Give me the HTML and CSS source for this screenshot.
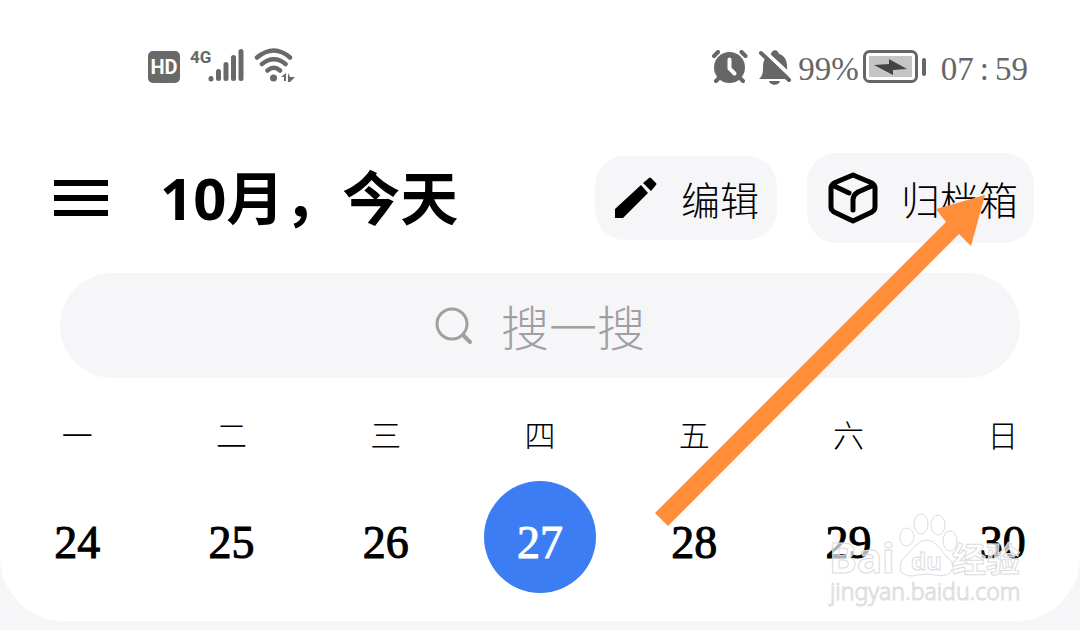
FILE: index.html
```html
<!DOCTYPE html>
<html lang="zh-CN">
<head>
  <meta charset="UTF-8">
  <meta name="viewport" content="width=device-width, initial-scale=1.0">
  <title>10月，今天</title>
  <link rel="stylesheet" href="styles.css">
</head>
<body>
  <div class="screen">
    <div class="status-bar">
      <div class="status-left">
        <span class="hd">HD</span>
        <span class="network">4G</span>
        <svg class="signal" width="36" height="34" viewBox="0 0 36 34" stroke="#696969" stroke-width="5" stroke-linecap="round">
          <path d="M3 30.5v.5M10.500 23.500v7M18 16.500v14M25.500 9.500v21M33 3.500v27"/>
        </svg>
        <svg class="wifi" width="42" height="34" viewBox="0 0 42 34" fill="none" stroke="#696969" stroke-width="4.500" stroke-linecap="round">
          <path d="M3 9.500Q20 -4.500 36 9.500M8 16Q20 6.500 31.500 16M13.500 22.500Q20 17 26 22.500"/>
          <circle cx="19.500" cy="30" r="3.500" fill="#696969" stroke="none"/>
          <path d="M27 29l5-4v8h-2v-4zM34 25l2 4h5l-5 5h-2z" fill="#696969" stroke="none"/>
        </svg>
      </div>
      <div class="status-right">
        <svg width="36" height="34" viewBox="0 0 36 34" fill="none" stroke-linecap="round">
          <circle cx="17.500" cy="17.500" r="15.500" fill="#666"/>
          <path d="M2 6l4-4M29.500 2l4 4M7 28l-3 3M28 28l3 3" stroke="#666" stroke-width="4"/>
          <path d="M17.500 9.500v9l5 5" stroke="#fff" stroke-width="4"/>
        </svg>
        <svg class="bell" width="34" height="35" viewBox="0 0 34 35">
          <path d="M1 29c4-3 4-8 4-12 0-8 4-12 8-13 1-5 7-5 8 0 5 1 8 6 8 12 0 5 1 10 3 13zM11 31h11c-1 5-10 5-11 0z" fill="#666"/>
          <path d="M5 0l30 28" stroke="#fff" stroke-width="4"/>
          <path d="M3 3l28 27" stroke="#666" stroke-width="4" stroke-linecap="round"/>
        </svg>
        <span class="percent">99%</span>
        <svg class="battery" width="64" height="34" viewBox="0 0 64 34">
          <rect x="1.500" y="1.500" width="52" height="30" rx="5" fill="#fff" stroke="#666" stroke-width="3"/>
          <rect x="6" y="6" width="43" height="21" rx="1" fill="#c5c5c5"/>
          <path d="M11 15l15-1V9l18 10-14 1v5z" fill="#444"/>
          <rect x="59" y="8" width="4" height="18" rx="2" fill="#666"/>
        </svg>
        <time class="clock"><span>07</span><span>:</span><span>59</span></time>
      </div>
    </div>

    <header class="header">
      <button class="menu" aria-label="菜单">
        <span></span>
        <span></span>
        <span></span>
      </button>
      <h1>10月，今天</h1>
      <div class="actions">
        <button class="action">
          <svg width="42" height="42" viewBox="0 0 42 42">
            <path d="M0 32L26 8l7 8L8 41H0zM28 6l6-5q1-1 2 0l5 5q1 1 0 2l-5 6z"/>
          </svg>
          <span>编辑</span>
        </button>
        <button class="action archive">
          <svg width="52" height="52" viewBox="0 0 52 52" fill="none" stroke="#000" stroke-width="5" stroke-linecap="round" stroke-linejoin="round">
            <path d="M26 3L45 11Q48 13 48 16V35Q48 38 45 40L26 49 7 40Q4 38 4 35V16Q4 13 7 11zM5 13l17 8M47 13L31 20Q26 23 26 28V38"/>
          </svg>
          <span>归档箱</span>
        </button>
      </div>
    </header>

    <label class="search">
      <svg width="38" height="38" viewBox="0 0 38 38" fill="none" stroke="#a0a0a0" stroke-width="3" stroke-linecap="round">
        <circle cx="17" cy="17" r="15"/>
        <path d="M28 28l7 7" stroke-width="4"/>
      </svg>
      <input type="text" placeholder="搜一搜" aria-label="搜一搜">
    </label>

    <table class="calendar">
      <thead>
        <tr>
          <th>一</th>
          <th>二</th>
          <th>三</th>
          <th>四</th>
          <th>五</th>
          <th>六</th>
          <th>日</th>
        </tr>
      </thead>
      <tbody>
        <tr>
          <td><button class="day">24</button></td>
          <td><button class="day">25</button></td>
          <td><button class="day">26</button></td>
          <td><button class="day today">27</button></td>
          <td><button class="day">28</button></td>
          <td><button class="day">29</button></td>
          <td><button class="day">30</button></td>
        </tr>
      </tbody>
    </table>

    <svg class="arrow" width="340" height="340" viewBox="0 0 340 340">
      <path d="M5 323L296 32 286 19 335 5 321 56 309 44 18 336z" fill="#ff8d39"/>
    </svg>

    <svg class="watermark" width="200" height="96" viewBox="0 0 200 96">
      <text class="brand" x="4" y="60">Bai</text>
      <ellipse cx="82" cy="24" rx="7" ry="9"/>
      <ellipse cx="96" cy="11" rx="7" ry="10"/>
      <ellipse cx="113" cy="12" rx="7" ry="10"/>
      <ellipse cx="125" cy="28" rx="7" ry="10"/>
      <path d="M90 33Q102 21 113 33L121 43Q132 51 125 60 119 64 110 62 102 60 93 62 83 65 76 59 73 49 81 43z"/>
      <text class="du" x="86" y="57">du</text>
      <text class="brand-cn" x="127" y="59">经验</text>
      <text class="site" x="5" y="87">jingyan.baidu.com</text>
    </svg>
  </div>
</body>
</html>
```
FILE: styles.css
```css
* {
  margin: 0;
  padding: 0;
  box-sizing: border-box;
}
body {
  font-family: "Liberation Serif", "Noto Sans CJK SC", serif;
  font-weight: 300;
  background-color: #f6f6f8;
  color: #000;
}
button {
  font: inherit;
  color: inherit;
  border: none;
  background: none;
  cursor: pointer;
}
.screen {
  position: relative;
  background-color: #fff;
  border-radius: 0 0 64px 64px;
  padding: 48px 0 28px;
}
.status-bar {
  display: flex;
  justify-content: space-between;
  height: 38px;
  padding: 0 52px 0 148px;
  color: #666;
}
.status-left, .status-right {
  display: flex;
  align-items: flex-start;
}
.hd {
  width: 32px;
  height: 32px;
  margin-top: 3px;
  border-radius: 5px;
  background-color: #696969;
  color: #fff;
  font: bold 20px/32px "Roboto", sans-serif;
  text-align: center;
}
.network {
  width: 18px;
  margin-left: 10px;
  font: bold 17px/18px "Roboto", sans-serif;
}
.wifi {
  margin-left: 10px;
}
.bell {
  margin-left: 10px;
}
.status-right svg {
  margin-top: 2px;
}
.percent, .clock {
  font-size: 33px;
  line-height: 42px;
}
.percent {
  margin-left: 6px;
}
.battery {
  margin-left: 4px;
}
.clock {
  display: flex;
  gap: 6px;
  margin-left: 14px;
}
.header {
  display: flex;
  align-items: center;
  margin-top: 67px;
  padding: 0 46px 0 54px;
}
.menu {
  display: flex;
  flex-direction: column;
  gap: 9px;
  width: 54px;
}
.menu span {
  height: 6px;
  background-color: #000;
}
.header h1 {
  margin-left: 52px;
  font: bold 58px/90px "Noto Sans", "Noto Sans CJK SC", sans-serif;
}
.actions {
  display: flex;
  align-items: center;
  gap: 30px;
  margin-left: auto;
}
.action {
  display: flex;
  align-items: center;
  gap: 24px;
  height: 84px;
  padding: 0 18px 0 20px;
  border-radius: 30px;
  background-color: #f6f6f8;
  font-size: 39px;
  line-height: 60px;
}
.action span {
  padding-top: 8px;
}
.archive {
  height: 90px;
  gap: 22px;
  padding: 0 16px 0 20px;
}
.search {
  display: flex;
  align-items: center;
  justify-content: center;
  gap: 28px;
  height: 105px;
  margin: 30px 60px 0;
  border-radius: 53px;
  background-color: #f6f6f8;
}
.search input {
  width: 144px;
  padding-top: 8px;
  border: none;
  outline: none;
  background: none;
  font: inherit;
  font-size: 48px;
}
.search input::placeholder {
  color: #a0a0a0;
}
.calendar {
  width: 100%;
  margin-top: 16px;
  table-layout: fixed;
  border-collapse: collapse;
  text-align: center;
}
.calendar th {
  height: 87px;
  padding-bottom: 8px;
  font-size: 31px;
  font-weight: 300;
}
.day {
  display: block;
  width: 112px;
  height: 112px;
  margin: 0 auto;
  padding-top: 10px;
  border-radius: 50%;
  font-size: 46px;
  -webkit-text-stroke: 1px currentColor;
}
.today {
  background-color: #3d7df3;
  color: #fff;
}
.arrow {
  position: absolute;
  top: 190px;
  right: 90px;
}
.watermark {
  position: absolute;
  right: 55px;
  bottom: 12px;
  fill: rgba(255, 255, 255, 0.7);
  stroke: #dcdcdc;
}
.watermark text {
  font-family: "Noto Sans", sans-serif;
}
.watermark .brand {
  font-size: 42px;
  font-weight: bold;
}
.watermark .du {
  font-size: 24px;
  font-weight: bold;
}
.watermark .brand-cn {
  font-family: "Noto Sans CJK SC", sans-serif;
  font-size: 34px;
  font-weight: bold;
}
.watermark .site {
  font-size: 23px;
}
```
